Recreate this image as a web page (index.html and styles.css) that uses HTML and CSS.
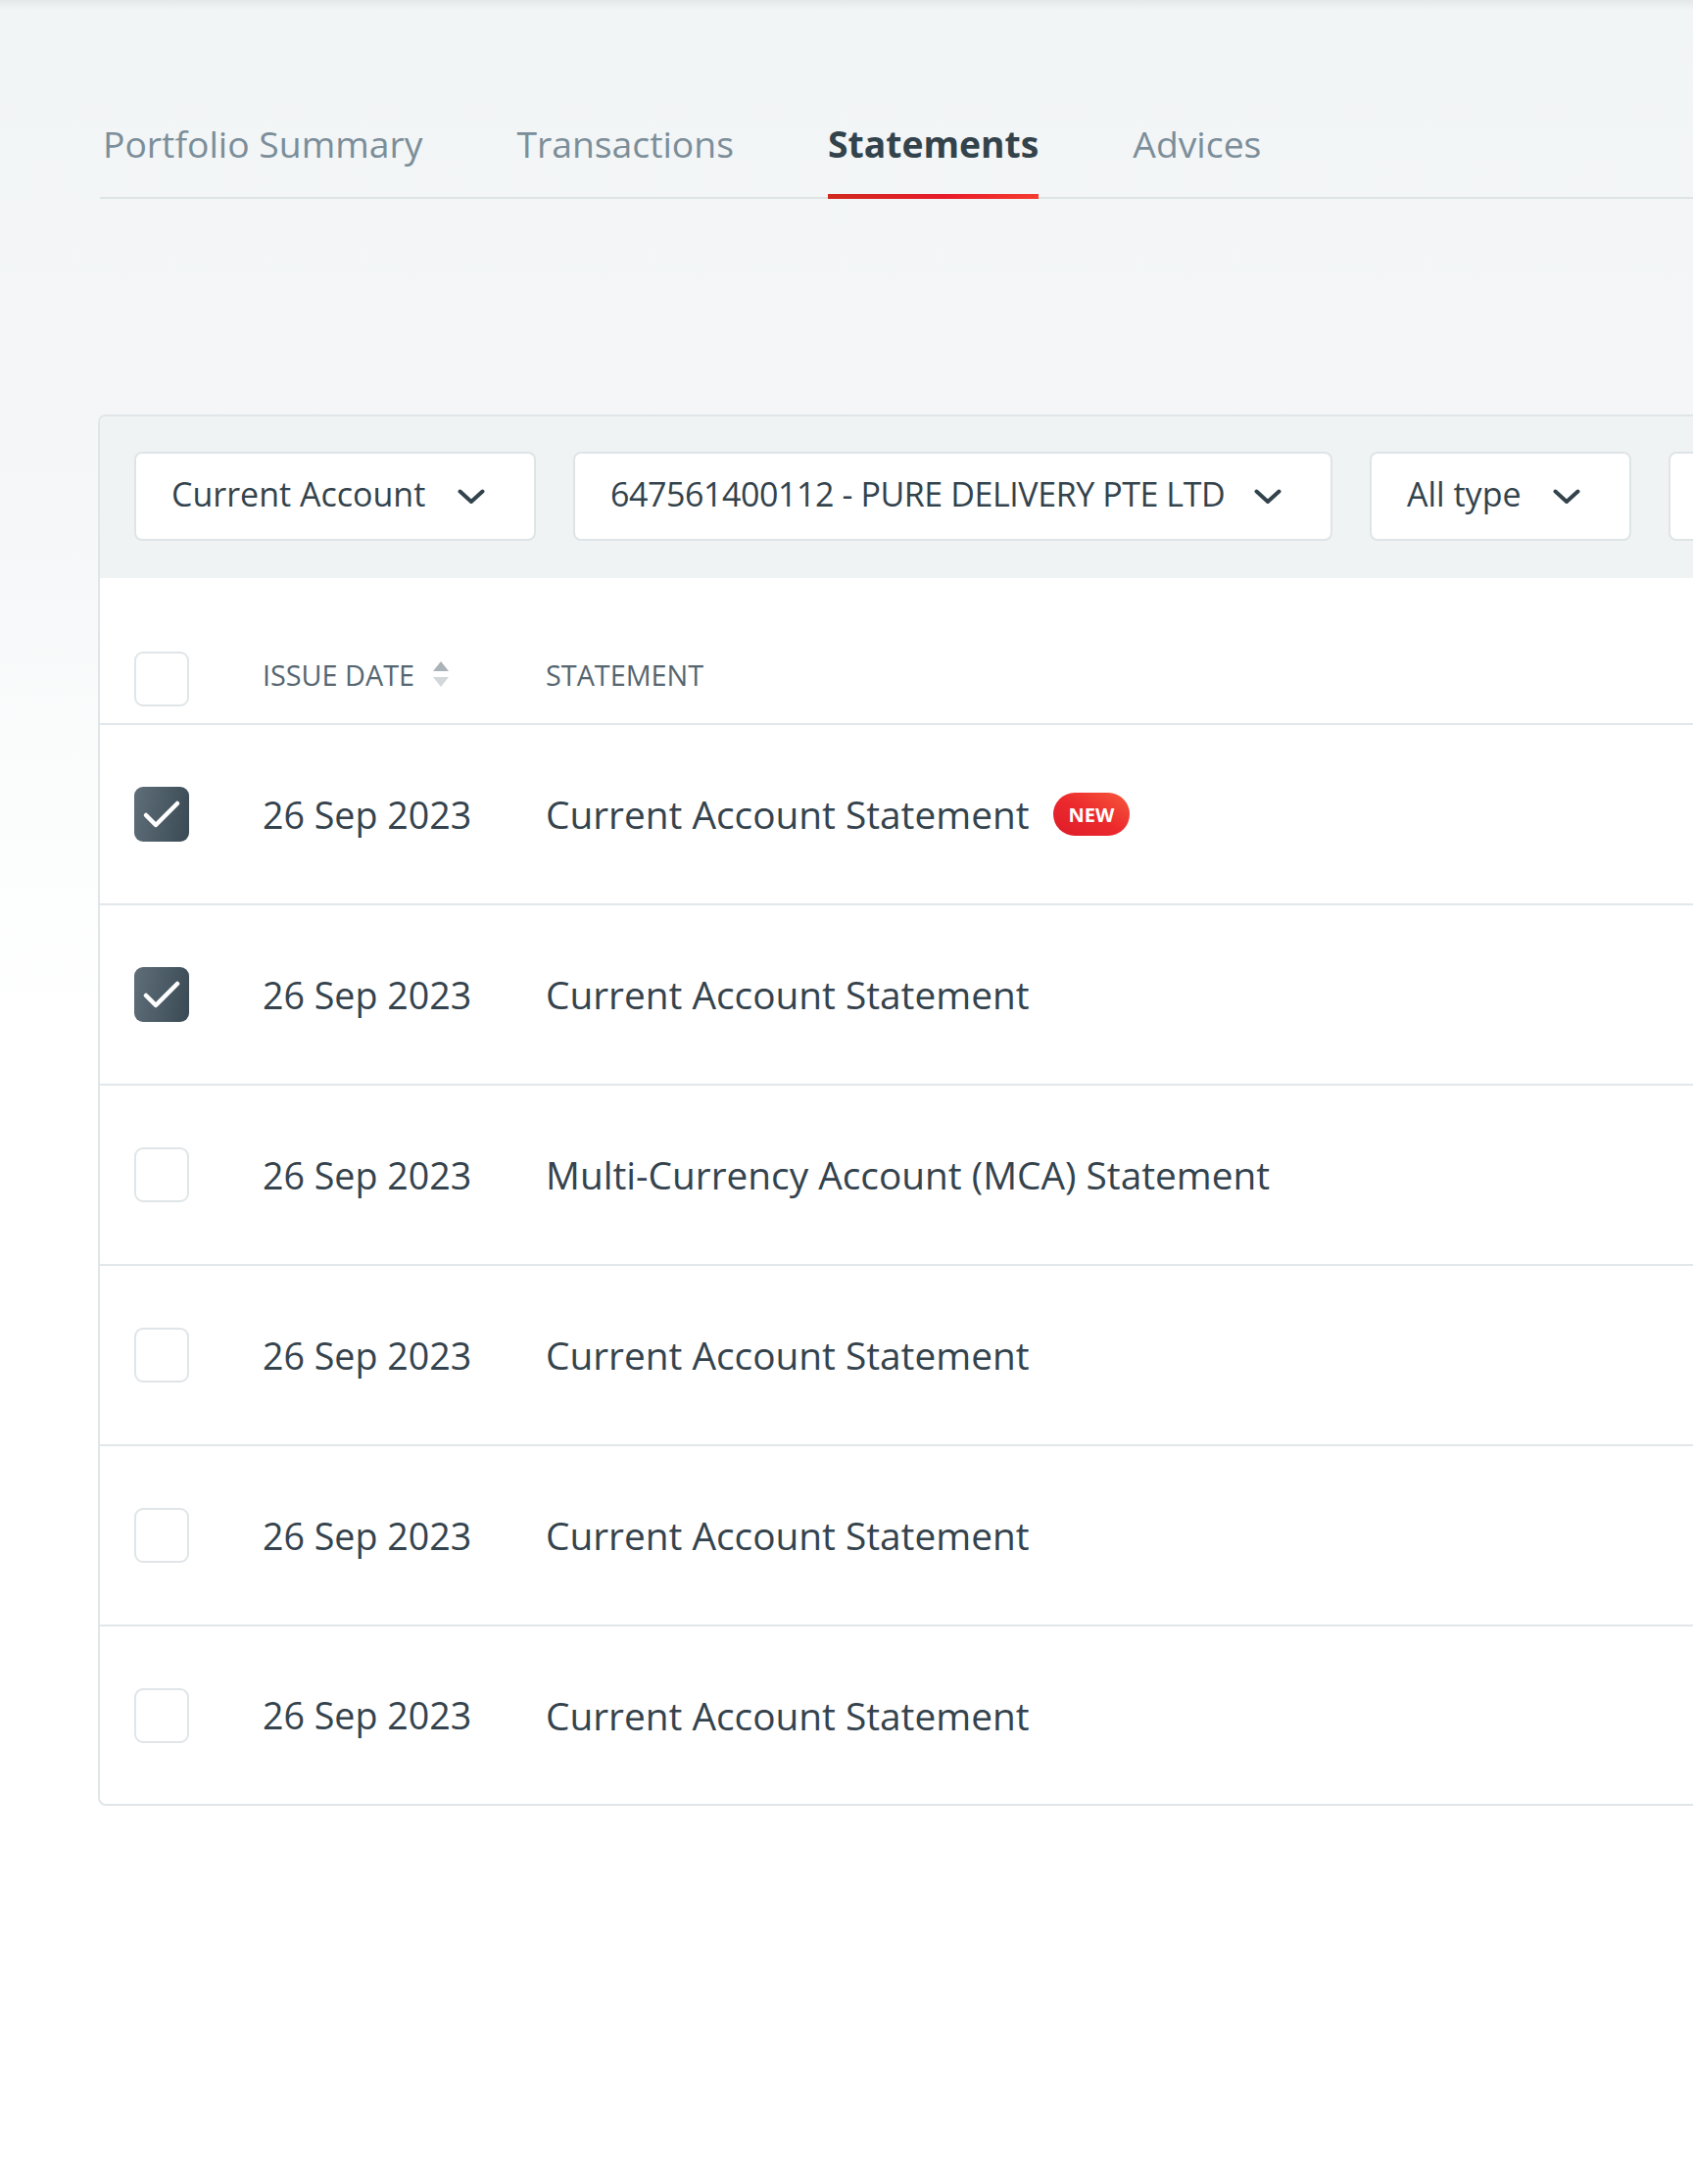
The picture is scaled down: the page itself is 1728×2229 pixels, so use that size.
FILE: index.html
```html
<!DOCTYPE html>
<html lang="en">
<head>
<meta charset="utf-8">
<title>Statements</title>
<link rel="stylesheet" href="styles.css">
</head>
<body>
<div class="page">
  <nav class="tabs">
    <a class="tab">Portfolio Summary</a>
    <a class="tab">Transactions</a>
    <a class="tab active">Statements</a>
    <a class="tab">Advices</a>
  </nav>

  <section class="card">
    <div class="filters">
      <div class="select sel-product"><span>Current Account</span><svg class="chev" viewBox="0 0 28 16"><path d="M2.5 2.5 L14 13 L25.5 2.5"/></svg></div>
      <div class="select sel-account"><span>647561400112 - PURE DELIVERY PTE LTD</span><svg class="chev" viewBox="0 0 28 16"><path d="M2.5 2.5 L14 13 L25.5 2.5"/></svg></div>
      <div class="select sel-type"><span>All type</span><svg class="chev" viewBox="0 0 28 16"><path d="M2.5 2.5 L14 13 L25.5 2.5"/></svg></div>
      <div class="select sel-more"><span>&nbsp;</span></div>
    </div>

    <div class="table">
      <div class="row head">
        <span class="cb"></span>
        <span class="th">ISSUE DATE <svg class="sort" viewBox="0 0 20 28"><path class="up" d="M10 1 L18 11 L2 11 Z"/><path class="down" d="M10 27 L18 17 L2 17 Z"/></svg></span>
        <span class="th">STATEMENT</span>
      </div>
      <div class="row">
        <span class="cb checked"><svg viewBox="0 0 56 56"><path d="M12 29 L22 39 L44 17"/></svg></span>
        <span class="td date">26 Sep 2023</span>
        <span class="td name">Current Account Statement <span class="badge">NEW</span></span>
      </div>
      <div class="row">
        <span class="cb checked"><svg viewBox="0 0 56 56"><path d="M12 29 L22 39 L44 17"/></svg></span>
        <span class="td date">26 Sep 2023</span>
        <span class="td name">Current Account Statement</span>
      </div>
      <div class="row">
        <span class="cb"></span>
        <span class="td date">26 Sep 2023</span>
        <span class="td name">Multi-Currency Account (MCA) Statement</span>
      </div>
      <div class="row">
        <span class="cb"></span>
        <span class="td date">26 Sep 2023</span>
        <span class="td name">Current Account Statement</span>
      </div>
      <div class="row">
        <span class="cb"></span>
        <span class="td date">26 Sep 2023</span>
        <span class="td name">Current Account Statement</span>
      </div>
      <div class="row">
        <span class="cb"></span>
        <span class="td date">26 Sep 2023</span>
        <span class="td name">Current Account Statement</span>
      </div>
    </div>
  </section>
</div>
</body>
</html>
```

FILE: styles.css
```css
html, body {
  margin: 0;
  padding: 0;
}

body {
  width: 1728px;
  min-height: 2229px;
  overflow: hidden;
  font-family: "Open Sans", "Noto Sans", sans-serif;
  color: #34434d;
  background:
    linear-gradient(180deg, rgba(40, 55, 65, 0.07) 0px, rgba(40, 55, 65, 0) 10px),
    linear-gradient(180deg, #f2f5f6 0px, #f4f6f7 450px, #fbfcfc 800px, #ffffff 1050px);
}

.page {
  padding-left: 100px;
}

/* Tabs */
.tabs {
  display: flex;
  gap: 96px;
  margin-left: 2px;
  padding-top: 122px;
  padding-left: 3px;
  border-bottom: 2px solid #dee3e6;
}

.tab {
  position: relative;
  font-size: 37.3px;
  line-height: 50px;
  padding-bottom: 29px;
  color: #7b8e99;
  white-space: nowrap;
}

.tab.active {
  color: #33434c;
  font-weight: 700;
}

.tab.active::after {
  content: "";
  position: absolute;
  left: 0;
  right: 0;
  bottom: -2px;
  height: 5px;
  background: linear-gradient(90deg, #d02a1f 0%, #e81b2a 55%, #f53c30 100%);
}

/* Card */
.card {
  margin-top: 220px;
  width: 1800px;
  border: 2px solid #e0e5e8;
  border-radius: 8px;
  background: #ffffff;
  overflow: hidden;
}

.filters {
  display: flex;
  gap: 38px;
  padding: 36px 35px 38px;
  background: #f0f3f4;
}

.select {
  box-sizing: border-box;
  display: flex;
  align-items: center;
  justify-content: space-between;
  height: 91px;
  padding: 0 50px 0 36px;
  border: 2px solid #dfe4e7;
  border-radius: 8px;
  background: #ffffff;
  font-size: 34px;
  color: #33434c;
  white-space: nowrap;
  flex: none;
}

.select span {
  padding-bottom: 5px;
}

.sel-product { width: 410px; }
.sel-account { width: 775px; letter-spacing: -0.43px; }
.sel-type { width: 267px; }
.sel-more { width: 300px; }

.chev {
  width: 28px;
  height: 16px;
  flex: none;
}

.chev path {
  fill: none;
  stroke: #33434c;
  stroke-width: 4;
  stroke-linecap: round;
  stroke-linejoin: round;
}

/* Table */
.row {
  display: grid;
  grid-template-columns: 131px 289px 1fr;
  align-items: center;
  height: 182px;
  padding-left: 35px;
  border-bottom: 2px solid #e2e7ea;
}

.row:last-child {
  border-bottom: none;
  height: 181px;
}

.row.head {
  height: auto;
  padding-top: 75px;
  padding-bottom: 17px;
}

.th {
  display: flex;
  align-items: center;
  gap: 17px;
  font-size: 28.8px;
  color: #566670;
  margin-bottom: 10px;
}

.sort {
  width: 20px;
  height: 28px;
}

.sort .up { fill: #aab3b9; }
.sort .down { fill: #d2d7da; }

.td {
  display: flex;
  align-items: center;
  color: #34434d;
  white-space: nowrap;
}

.td.date {
  font-size: 37.6px;
}

.td.name {
  font-size: 38.8px;
}

.cb {
  box-sizing: border-box;
  width: 56px;
  height: 56px;
  border: 2px solid #e0e5e8;
  border-radius: 9px;
  background: #ffffff;
}

.cb.checked {
  border: none;
  background: linear-gradient(100deg, #5f6e78 0%, #3a4a55 100%);
}

.cb svg {
  display: block;
  width: 56px;
  height: 56px;
}

.cb svg path {
  fill: none;
  stroke: #ffffff;
  stroke-width: 4.5;
  stroke-linecap: round;
  stroke-linejoin: round;
}

.badge {
  display: inline-flex;
  align-items: center;
  height: 44px;
  margin-left: 24px;
  padding: 0 16px;
  border-radius: 22px;
  background: linear-gradient(30deg, #dc1c28 0%, #ec2a2d 50%, #f65a3c 100%);
  color: #ffffff;
  font-size: 20px;
  font-weight: 700;
  letter-spacing: 0;
}
```
